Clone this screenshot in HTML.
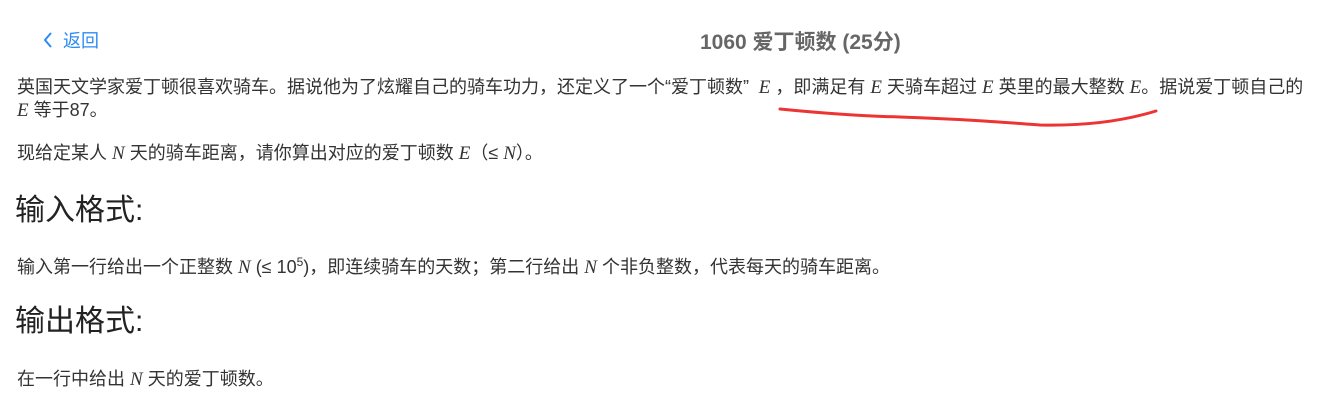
<!DOCTYPE html>
<html><head><meta charset="utf-8"><style>
body{margin:0;background:#fff;width:1331px;height:406px;overflow:hidden;font-family:"Liberation Sans","Noto Sans CJK SC",sans-serif;color:#333;position:relative}
.t{position:absolute;left:17px;font-size:18px;white-space:nowrap;line-height:23px}
.m{font-family:"Liberation Serif",serif;font-style:italic;font-size:19px}
h2{position:absolute;left:15px;margin:0;font-weight:normal;font-size:30px;color:#222;line-height:36px}
</style></head><body>
<div style="position:absolute;left:42px;top:27px;color:#2d8cf0;font-size:18px"><svg width="12" height="18" viewBox="0 0 12 18" style="vertical-align:-2px;margin-right:9px"><path d="M9 2 L3 9 L9 16" fill="none" stroke="#2d8cf0" stroke-width="2"/></svg>返回</div>
<div style="position:absolute;left:700px;top:26px;font-size:21px;font-weight:bold;color:#666">1060 爱丁顿数 (25分)</div>
<div class="t" style="top:76px">英国天文学家爱丁顿很喜欢骑车。据说他为了炫耀自己的骑车功力，还定义了一个“爱丁顿数” <span class="m">&nbsp;E</span> ，即满足有 <span class="m">E</span> 天骑车超过 <span class="m">E</span> 英里的最大整数 <span class="m">E</span>。据说爱丁顿自己的</div>
<div class="t" style="top:99px"><span class="m">E</span> 等于87。</div>
<div class="t" style="top:142px">现给定某人 <span class="m">N</span> 天的骑车距离，请你算出对应的爱丁顿数 <span class="m">E</span>（≤ <span class="m">N</span>）。</div>
<h2 style="top:193px">输入格式:</h2>
<div class="t" style="top:251px">输入第一行给出一个正整数 <span class="m">N</span> (≤ 10<sup style="font-size:12px">5</sup>)，即连续骑车的天数；第二行给出 <span class="m">N</span> 个非负整数，代表每天的骑车距离。</div>
<h2 style="top:304px">输出格式:</h2>
<div class="t" style="top:368px">在一行中给出 <span class="m">N</span> 天的爱丁顿数。</div>
<svg style="position:absolute;left:0;top:0" width="1331" height="406"><path d="M780 109 C820 113 860 116 900 117 C960 119 1000 122 1040 125 C1080 126 1120 122 1156 111" fill="none" stroke="#ee3333" stroke-width="3" stroke-linecap="round"/></svg>
</body></html>
